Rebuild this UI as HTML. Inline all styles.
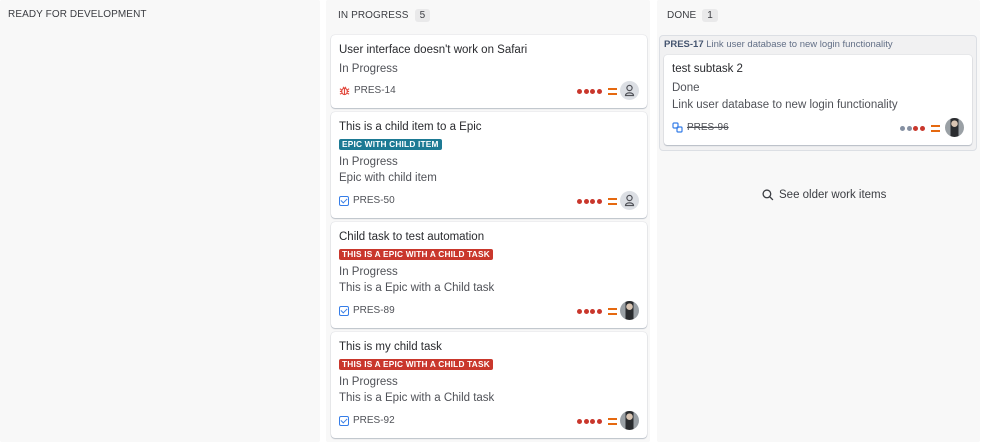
<!DOCTYPE html>
<html><head><meta charset="utf-8"><style>
*{margin:0;padding:0;box-sizing:border-box}
body{width:998px;height:442px;background:#fff;font-family:"Liberation Sans",Arial,sans-serif;color:#292a2e;position:relative;overflow:hidden}
.col{position:absolute;top:0;height:442px;background:#f8f8f8;border-radius:2px}
.h{position:absolute;top:9px;font-size:10px;color:#3b3d42;letter-spacing:0.1px;display:flex;align-items:center}
.cnt{display:inline-block;background:#e9e9ea;border-radius:3px;padding:1px 5px;margin-left:6px;font-size:10px;color:#3b3d42}
.card{position:absolute;left:331px;width:316px;background:#fff;border-radius:4px;box-shadow:0 1px 1px rgba(9,30,66,.22),0 0 1px rgba(9,30,66,.28)}
.t{position:absolute;left:8px;font-size:11.5px;color:#292a2e}
.s{position:absolute;left:8px;font-size:11.5px;color:#505258}
.lz{position:absolute;left:8px;height:11px;font-size:8.3px;font-weight:bold;color:#fff;padding:0 3px;border-radius:2px;line-height:11px;letter-spacing:0.2px}
.key{position:absolute;left:8px;font-size:10px;color:#505258;display:flex;align-items:center;gap:4px}
.pri{position:absolute;right:30px;display:flex;align-items:center;gap:1.5px}
.d{width:5px;height:5px;border-radius:50%;background:#c9372c}
.eq{width:9px;height:7px;border-top:2px solid #e56910;border-bottom:2px solid #e56910;margin-left:5px}
.av{position:absolute;right:8px;width:19px;height:19px;border-radius:50%;background:#dcdfe4;overflow:hidden}
.ph{background:radial-gradient(circle at 50% 30%,#d9c5b3 0 3px,transparent 3.5px),linear-gradient(90deg,#9aa0a5 0 30%,#2a2c2f 30% 70%,#9aa0a5 70%);}
.ck{width:10px;height:10px;border:1.3px solid #357de8;border-radius:2px;position:relative}
.ck:after{content:"";position:absolute;left:2px;top:0px;width:3px;height:5px;border:solid #357de8;border-width:0 1.3px 1.3px 0;transform:rotate(45deg)}
</style></head><body>
<div class="col" style="left:0;width:320px"></div>
<div class="h" style="left:8px">READY FOR DEVELOPMENT</div>
<div class="col" style="left:326px;width:324px"></div>
<div class="h" style="left:338px">IN PROGRESS<span class="cnt">5</span></div>
<div class="col" style="left:657px;width:323px"></div>
<div class="h" style="left:667px">DONE<span class="cnt">1</span></div>

<div class="card" style="top:35px;height:73px">
<div class="t" style="top:9px">User interface doesn't work on Safari</div>
<div class="s" style="top:28px">In Progress</div>
<div class="key" style="top:50px"><svg width="11" height="11" viewBox="0 0 12 12" fill="none" stroke="#e2483d" stroke-width="1.2"><ellipse cx="6" cy="7" rx="3" ry="3.5"/><path d="M6 3.5V10.5M1 4l2 1.5M11 4l-2 1.5M1 7h2M9 7h2M1 10l2-1M11 10l-2-1M4.5 2l1 1.5M7.5 2l-1 1.5"/></svg>PRES-14</div>
<div class="pri" style="top:53px"><i class="d"></i><i class="d"></i><i class="d"></i><i class="d"></i><i class="eq"></i></div>
<div class="av" style="top:46px"><svg width="19" height="19" viewBox="0 0 19 19" fill="none" stroke="#505258" stroke-width="1.2"><circle cx="9.5" cy="7" r="2.6"/><path d="M5.5 14.5c0-3.5 8-3.5 8 0z"/></svg></div>
</div>

<div class="card" style="top:112px;height:106px">
<div class="t" style="top:9px">This is a child item to a Epic</div>
<div class="lz" style="top:27px;background:#1d7a94">EPIC WITH CHILD ITEM</div>
<div class="s" style="top:44px">In Progress</div>
<div class="s" style="top:60px">Epic with child item</div>
<div class="key" style="top:83px"><i class="ck"></i>PRES-50</div>
<div class="pri" style="top:86px"><i class="d"></i><i class="d"></i><i class="d"></i><i class="d"></i><i class="eq"></i></div>
<div class="av" style="top:79px"><svg width="19" height="19" viewBox="0 0 19 19" fill="none" stroke="#505258" stroke-width="1.2"><circle cx="9.5" cy="7" r="2.6"/><path d="M5.5 14.5c0-3.5 8-3.5 8 0z"/></svg></div>
</div>

<div class="card" style="top:222px;height:106px">
<div class="t" style="top:9px">Child task to test automation</div>
<div class="lz" style="top:27px;background:#c9372c">THIS IS A EPIC WITH A CHILD TASK</div>
<div class="s" style="top:44px">In Progress</div>
<div class="s" style="top:60px">This is a Epic with a Child task</div>
<div class="key" style="top:83px"><i class="ck"></i>PRES-89</div>
<div class="pri" style="top:86px"><i class="d"></i><i class="d"></i><i class="d"></i><i class="d"></i><i class="eq"></i></div>
<div class="av ph" style="top:79px"></div>
</div>

<div class="card" style="top:332px;height:106px">
<div class="t" style="top:9px">This is my child task</div>
<div class="lz" style="top:27px;background:#c9372c">THIS IS A EPIC WITH A CHILD TASK</div>
<div class="s" style="top:44px">In Progress</div>
<div class="s" style="top:60px">This is a Epic with a Child task</div>
<div class="key" style="top:83px"><i class="ck"></i>PRES-92</div>
<div class="pri" style="top:86px"><i class="d"></i><i class="d"></i><i class="d"></i><i class="d"></i><i class="eq"></i></div>
<div class="av ph" style="top:79px"></div>
</div>

<div style="position:absolute;left:659px;top:35px;width:318px;height:116px;background:#f1f1f2;border:1px solid #dcdfe4;border-radius:4px"></div>
<div style="position:absolute;left:664px;top:39px;font-size:9.5px;color:#626f86"><b style="color:#44546f">PRES-17</b> Link user database to new login functionality</div>
<div style="position:absolute;left:664px;top:55px;width:308px;height:90px;background:#fff;border-radius:3px;box-shadow:0 1px 1px rgba(9,30,66,.22),0 0 1px rgba(9,30,66,.28)">
<div class="t" style="top:8px">test subtask 2</div>
<div class="s" style="top:27px">Done</div>
<div class="s" style="top:44px">Link user database to new login functionality</div>
<div class="key" style="top:67px"><svg width="11" height="11" viewBox="0 0 11 11" fill="none" stroke="#357de8" stroke-width="1.2"><rect x="1" y="1" width="5" height="5" rx="1"/><rect x="5" y="5" width="5" height="5" rx="1"/></svg><s>PRES-96</s></div>
<div class="pri" style="top:70px;right:32px"><i class="d" style="background:#8590a2"></i><i class="d" style="background:#8590a2"></i><i class="d"></i><i class="d"></i><i class="eq"></i></div>
<div class="av ph" style="top:63px;right:8px"></div>
</div>

<div style="position:absolute;left:762px;top:189px;font-size:11.5px;color:#3b3d42;display:flex;align-items:center;gap:5px"><svg width="12" height="12" viewBox="0 0 11 11" fill="none" stroke="#3b3d42" stroke-width="1.2"><circle cx="4.5" cy="4.5" r="3.5"/><path d="M7 7l3 3"/></svg>See older work items</div>
</body></html>
